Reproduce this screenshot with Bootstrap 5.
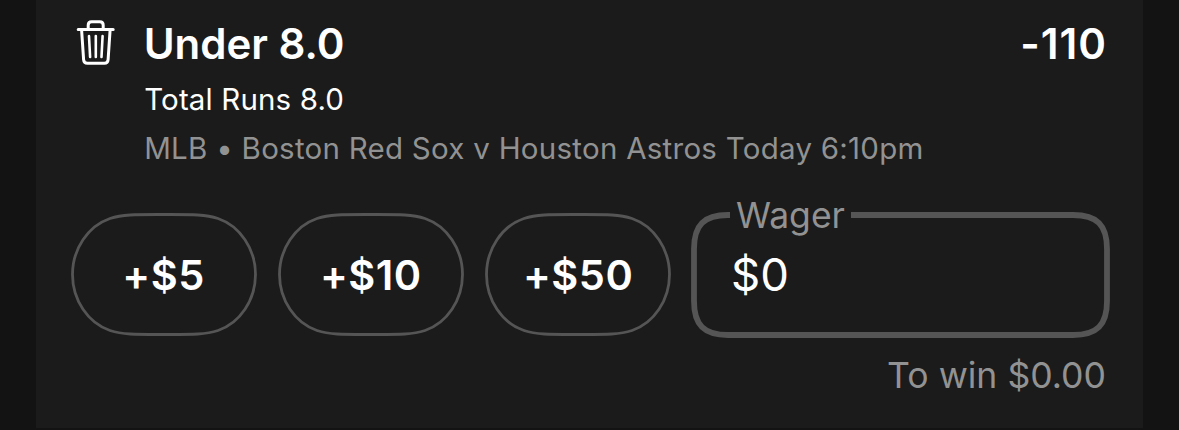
<!DOCTYPE html>
<html lang="en">
<head>
<meta charset="utf-8">
<meta name="viewport" content="width=device-width, initial-scale=1">
<title>Bet slip</title>
<link href="https://cdn.jsdelivr.net/npm/bootstrap@5.3.0/dist/css/bootstrap.min.css" rel="stylesheet">
<style>
body{background:#131313;color:#fff;font-family:Inter,sans-serif;height:430px;overflow:hidden}
.slip{width:1107px;height:428px;margin-left:36px;background:#1b1b1b;padding:17px 33px 0 34.5px}
.bin{width:50px;margin:1px 18.2px 0 5.5px}
.pick{font-size:42px;line-height:54px;font-weight:600}
.pick-name{margin-left:-.5px}
.odds{letter-spacing:1px;margin-right:3px}
.market{font-size:29.5px;line-height:48px;margin-top:4px;letter-spacing:.14px}
.game{font-size:29.5px;line-height:48px;margin-top:1px;color:#929292;letter-spacing:.26px}
.stakes{margin-top:40px;height:126px}
.quick{width:186px;height:123px;margin:1px 21.3px 0 0;padding:2px 0 0;border:0;background:none;color:#fff;font-size:41.5px;font-weight:600;letter-spacing:.5px}
.outline{position:absolute;inset:0;fill:none;stroke:#555}
.wager{width:419px;height:126px;margin-left:-1.4px}
.wager-label{position:absolute;left:39px;top:-18px;padding:0 6px;background:#1b1b1b;font-size:35.5px;line-height:44px;color:#929292}
.amount{font-size:45.5px;line-height:56px;padding:35px 0 0 40px}
.towin{font-size:35.6px;line-height:44px;margin:16px 4px 0 0;color:#929292}
</style>
</head>
<body>
<main class="slip">
  <div class="d-flex">
    <div class="flex-shrink-0 bin">
      <svg class="d-block" width="40" height="48" viewBox="0 0 40 48" fill="none" stroke="#fff" stroke-width="3" stroke-linecap="round" stroke-linejoin="round"><path d="M2.2 11.5H37.2M12.2 11V7.2Q12.2 3.8 15.6 3.8H23.8Q27.2 3.8 27.2 7.2V11M5.6 12L7.6 41.6Q7.9 45.3 11.4 45.3H28.4Q31.8 45.3 32.1 41.6L34.1 12"/><path stroke-width="2.6" d="M13 18L14.1 39M19.8 18V39M26.6 18L25.5 39"/></svg>
    </div>
    <div class="flex-grow-1">
      <div class="d-flex justify-content-between pick"><span class="pick-name">Under 8.0</span><span class="odds">-110</span></div>
      <div class="market"><span>Total Runs 8.0</span></div>
      <div class="game"><span>MLB • Boston Red Sox v Houston Astros Today 6:10pm</span></div>
    </div>
  </div>
  <div class="d-flex stakes">
    <button class="quick position-relative flex-shrink-0"><svg class="outline" width="186" height="123" viewBox="0 0 186 123" stroke-width="2.8"><path d="M1.5 61.5C1.5 36 17 13 39 5.5C52 1.2 66 1.5 93 1.5S134 1.2 147 5.5C169 13 184.5 36 184.5 61.5S169 110 147 117.5C134 121.8 120 121.5 93 121.5S52 121.8 39 117.5C17 110 1.5 87 1.5 61.5Z"/></svg><span>+$5</span></button>
    <button class="quick position-relative flex-shrink-0"><svg class="outline" width="186" height="123" viewBox="0 0 186 123" stroke-width="2.8"><path d="M1.5 61.5C1.5 36 17 13 39 5.5C52 1.2 66 1.5 93 1.5S134 1.2 147 5.5C169 13 184.5 36 184.5 61.5S169 110 147 117.5C134 121.8 120 121.5 93 121.5S52 121.8 39 117.5C17 110 1.5 87 1.5 61.5Z"/></svg><span>+$10</span></button>
    <button class="quick position-relative flex-shrink-0"><svg class="outline" width="186" height="123" viewBox="0 0 186 123" stroke-width="2.8"><path d="M1.5 61.5C1.5 36 17 13 39 5.5C52 1.2 66 1.5 93 1.5S134 1.2 147 5.5C169 13 184.5 36 184.5 61.5S169 110 147 117.5C134 121.8 120 121.5 93 121.5S52 121.8 39 117.5C17 110 1.5 87 1.5 61.5Z"/></svg><span>+$50</span></button>
    <div class="wager position-relative flex-shrink-0">
      <svg class="outline" width="419" height="126" viewBox="0 0 419 126" stroke-width="5.8"><path d="M37 3H382C406 3 416 13 416 37V89C416 113 406 123 382 123H37C13 123 3 113 3 89V37C3 13 13 3 37 3Z"/></svg>
      <label class="wager-label">Wager</label>
      <div class="amount"><span>$0</span></div>
    </div>
  </div>
  <div class="text-end towin"><span>To win $0.00</span></div>
</main>
</body>
</html>
